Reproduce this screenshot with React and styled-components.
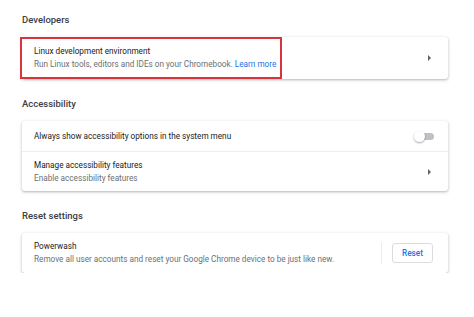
import React from 'react'
import styled, { createGlobalStyle } from 'styled-components'

const Global = createGlobalStyle`
  html, body {
    margin: 0;
    padding: 0;
    background: #fff;
    font-family: Roboto, 'Liberation Sans', Arial, sans-serif;
  }
`

const Page = styled.div`
  width: 426px;
  padding: 13px 0 0 22px;
`

const Heading = styled.h2`
  margin: ${p => (p.first ? '0' : '18px')} 0 10px 0;
  height: 14px;
  line-height: 14px;
  font-size: 9.5px;
  font-weight: 500;
  color: #3c4043;
`

const Card = styled.div`
  background: #fff;
  border-radius: 3px;
  box-shadow: 0 1px 2px rgba(60, 64, 67, 0.25), 0 1px 3px 1px rgba(60, 64, 67, 0.1);
`

const Row = styled.div`
  position: relative;
  display: flex;
  align-items: center;
  height: ${p => p.h}px;
  padding: 0 12px;
  box-sizing: border-box;
  & + & {
    border-top: 1px solid #eceef0;
  }
`

const Highlight = styled.div`
  position: absolute;
  left: -2px;
  top: 0;
  width: 262px;
  height: 42px;
  border: 2px solid #d9343b;
  box-sizing: border-box;
  pointer-events: none;
`

const Text = styled.div`
  flex: 1;
  display: flex;
  flex-direction: column;
`

const Title = styled.div`
  font-size: 8.2px;
  line-height: 13px;
  color: #202124;
`

const Sub = styled.div`
  font-size: 8.2px;
  line-height: 13px;
  color: #6b6f73;
`

const Link = styled.a`
  color: #1a73e8;
  text-decoration: none;
`

const Arrow = styled.span`
  width: 0;
  height: 0;
  margin-right: 5px;
  border-top: 3px solid transparent;
  border-bottom: 3px solid transparent;
  border-left: 3.5px solid #5f6368;
`

const Toggle = styled.span`
  position: relative;
  width: 17px;
  height: 7px;
  margin-right: 2px;
  border-radius: 4px;
  background: #bdc1c6;
  &::before {
    content: '';
    position: absolute;
    left: -3px;
    top: -2px;
    width: 11px;
    height: 11px;
    border-radius: 50%;
    background: #fff;
    box-shadow: 0 1px 2px rgba(0, 0, 0, 0.35);
  }
`

const Divider = styled.span`
  width: 1px;
  height: 22px;
  background: #eceef0;
  margin-right: 10px;
`

const Button = styled.button`
  width: 41px;
  height: 20px;
  margin-right: 3px;
  border: 1px solid #dadce0;
  border-radius: 3px;
  background: #fff;
  color: #1a73e8;
  font-family: inherit;
  font-size: 8.2px;
  font-weight: 500;
  padding: 0;
`

const App = () => {
  return (
    <Page>
      <Global />
      <Heading first>Developers</Heading>
      <Card>
        <Row h={42}>
          <Highlight />
          <Text>
            <Title>Linux development environment</Title>
            <Sub>
              Run Linux tools, editors and IDEs on your Chromebook. <Link>Learn more</Link>
            </Sub>
          </Text>
          <Arrow />
        </Row>
      </Card>

      <Heading>Accessibility</Heading>
      <Card>
        <Row h={30}>
          <Text>
            <Title>Always show accessibility options in the system menu</Title>
          </Text>
          <Toggle />
        </Row>
        <Row h={40}>
          <Text>
            <Title>Manage accessibility features</Title>
            <Sub>Enable accessibility features</Sub>
          </Text>
          <Arrow />
        </Row>
      </Card>

      <Heading>Reset settings</Heading>
      <Card>
        <Row h={40}>
          <Text>
            <Title>Powerwash</Title>
            <Sub>Remove all user accounts and reset your Google Chrome device to be just like new.</Sub>
          </Text>
          <Divider />
          <Button>Reset</Button>
        </Row>
      </Card>
    </Page>
  )
}

export default App
